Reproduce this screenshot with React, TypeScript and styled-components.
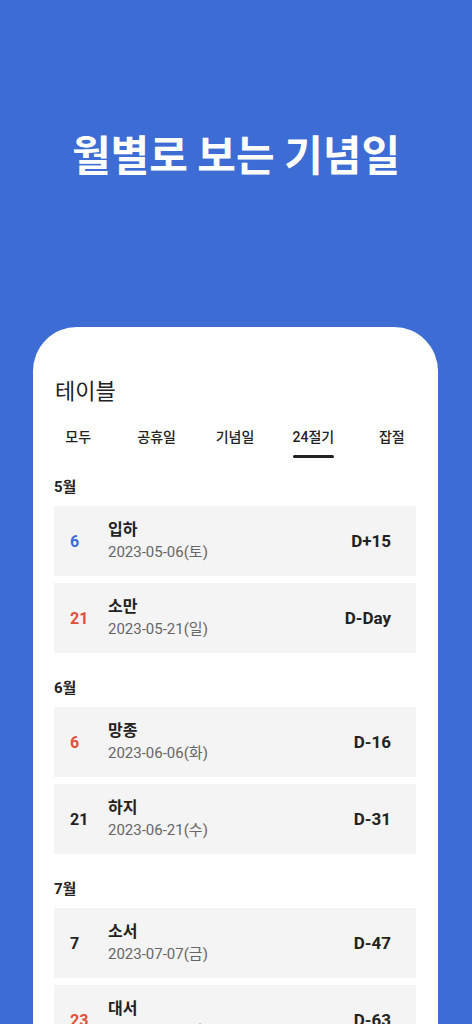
import { FunctionComponent } from "react";
import styled, { createGlobalStyle } from "styled-components";

const GlobalStyle = createGlobalStyle`
  html, body {
    margin: 0;
    padding: 0;
  }
  body {
    font-family: Roboto, "Noto Sans CJK KR", sans-serif;
    background: #3d6cd4;
  }
`;

const Page = styled.div`
  height: 1024px;
  overflow: hidden;
  background: #3d6cd4;
`;

const Hero = styled.div`
  height: 327px;
  box-sizing: border-box;
  padding-top: 125px;
  text-align: center;
`;

const HeroTitle = styled.h1`
  margin: 0;
  font-family: "Noto Sans CJK KR", sans-serif;
  font-size: 42px;
  line-height: 56px;
  font-weight: 700;
  color: #fff;
`;

const Card = styled.div`
  margin: 0 34px 0 33px;
  min-height: 800px;
  padding: 47px 22px 0 21px;
  background: #fff;
  border-radius: 44px 44px 0 0;
`;

const CardTitle = styled.h2`
  margin: 0 0 0 1px;
  font-family: "Noto Sans CJK KR", sans-serif;
  font-size: 22px;
  line-height: 30px;
  font-weight: 400;
  color: #222;
`;

const Tabs = styled.div`
  display: flex;
  margin: 16px -15px 0;
`;

const Tab = styled.div`
  flex: 1;
  display: flex;
  flex-direction: column;
  align-items: center;
  padding-top: 7px;
  height: 42px;
  box-sizing: border-box;
`;

const TabLabel = styled.span<{ active?: boolean }>`
  position: relative;
  font-size: 14px;
  line-height: 20px;
  font-weight: 500;
  color: #222;
  padding-bottom: 11px;
  ${({ active }) =>
    active &&
    `
    &::after {
      content: "";
      position: absolute;
      left: 0;
      right: 0;
      bottom: 0;
      height: 3px;
      border-radius: 2px;
      background: #222;
    }
  `}
`;

const SectionHeader = styled.div<{ first?: boolean }>`
  margin: ${({ first }) => (first ? "15px" : "25px")} 0 9px;
  font-size: 15px;
  line-height: 20px;
  font-weight: 700;
  color: #222;
`;

const List = styled.div`
  display: flex;
  flex-direction: column;
  gap: 7px;
`;

const Row = styled.div`
  display: flex;
  align-items: center;
  height: 70px;
  padding: 0 25px 0 16px;
  background: #f4f4f4;
`;

const Day = styled.span<{ color?: string }>`
  width: 38px;
  font-size: 16px;
  font-weight: 700;
  color: ${({ color }) => color || "#222"};
`;

const Info = styled.div`
  flex: 1;
  display: flex;
  flex-direction: column;
  gap: 2px;
`;

const Name = styled.span`
  font-size: 16px;
  line-height: 20px;
  font-weight: 700;
  color: #222;
`;

const DateText = styled.span`
  font-size: 15px;
  line-height: 21px;
  color: #666;
`;

const DDay = styled.span`
  font-size: 17px;
  font-weight: 700;
  color: #222;
`;

const BLUE = "#3d6cd4";
const RED = "#e0513a";

const sections = [
  {
    month: "5월",
    items: [
      { day: "6", color: BLUE, name: "입하", date: "2023-05-06(토)", d: "D+15" },
      { day: "21", color: RED, name: "소만", date: "2023-05-21(일)", d: "D-Day" },
    ],
  },
  {
    month: "6월",
    items: [
      { day: "6", color: RED, name: "망종", date: "2023-06-06(화)", d: "D-16" },
      { day: "21", name: "하지", date: "2023-06-21(수)", d: "D-31" },
    ],
  },
  {
    month: "7월",
    items: [
      { day: "7", name: "소서", date: "2023-07-07(금)", d: "D-47" },
      { day: "23", color: RED, name: "대서", date: "2023-07-23(일)", d: "D-63" },
    ],
  },
];

const tabs = ["모두", "공휴일", "기념일", "24절기", "잡절"];

const App: FunctionComponent = () => {
  return (
    <Page>
      <GlobalStyle />
      <Hero>
        <HeroTitle>월별로 보는 기념일</HeroTitle>
      </Hero>
      <Card>
        <CardTitle>테이블</CardTitle>
        <Tabs>
          {tabs.map((t) => (
            <Tab key={t}>
              <TabLabel active={t === "24절기"}>{t}</TabLabel>
            </Tab>
          ))}
        </Tabs>
        {sections.map((s, i) => (
          <div key={s.month}>
            <SectionHeader first={i === 0}>{s.month}</SectionHeader>
            <List>
              {s.items.map((it) => (
                <Row key={it.date}>
                  <Day color={it.color}>{it.day}</Day>
                  <Info>
                    <Name>{it.name}</Name>
                    <DateText>{it.date}</DateText>
                  </Info>
                  <DDay>{it.d}</DDay>
                </Row>
              ))}
            </List>
          </div>
        ))}
      </Card>
    </Page>
  );
};

export default App;
